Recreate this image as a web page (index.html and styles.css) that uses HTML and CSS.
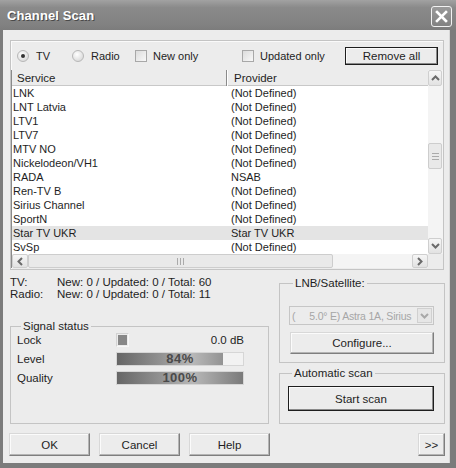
FILE: index.html
```html
<!DOCTYPE html>
<html>
<head>
<meta charset="utf-8">
<title>Channel Scan</title>
<link rel="stylesheet" href="styles.css">
</head>
<body>
<div class="window">
  <div class="titlebar">
    <span class="title">Channel Scan</span>
    <span class="close"><svg width="13" height="13" viewBox="0 0 13 13"><path d="M2 2 L11 11 M11 2 L2 11" stroke="#fff" stroke-width="2.6" stroke-linecap="square"/></svg></span>
  </div>
  <div class="client">
    <div class="topgroup">
      <div class="filters">
        <span class="opt opt-tv"><span class="radio on"></span>TV</span>
        <span class="opt opt-radio"><span class="radio"></span>Radio</span>
        <span class="opt opt-new"><span class="check"></span>New only</span>
        <span class="opt opt-upd"><span class="check"></span>Updated only</span>
        <span class="btn default remove">Remove all</span>
      </div>
      <div class="list">
        <div class="viewport">
          <div class="row head"><span class="c1">Service</span><span class="c2">Provider</span></div>
          <div class="row"><span class="c1">LNK</span><span class="c2">(Not Defined)</span></div>
          <div class="row"><span class="c1">LNT Latvia</span><span class="c2">(Not Defined)</span></div>
          <div class="row"><span class="c1">LTV1</span><span class="c2">(Not Defined)</span></div>
          <div class="row"><span class="c1">LTV7</span><span class="c2">(Not Defined)</span></div>
          <div class="row"><span class="c1">MTV NO</span><span class="c2">(Not Defined)</span></div>
          <div class="row"><span class="c1">Nickelodeon/VH1</span><span class="c2">(Not Defined)</span></div>
          <div class="row"><span class="c1">RADA</span><span class="c2">NSAB</span></div>
          <div class="row"><span class="c1">Ren-TV B</span><span class="c2">(Not Defined)</span></div>
          <div class="row"><span class="c1">Sirius Channel</span><span class="c2">(Not Defined)</span></div>
          <div class="row"><span class="c1">SportN</span><span class="c2">(Not Defined)</span></div>
          <div class="row sel"><span class="c1">Star TV UKR</span><span class="c2">Star TV UKR</span></div>
          <div class="row"><span class="c1">SvSp</span><span class="c2">(Not Defined)</span></div>
        </div>
        <div class="vscroll">
          <span class="sbtn"><svg width="9" height="6" viewBox="0 0 9 6"><path d="M1 5 L4.5 1.5 L8 5" fill="none" stroke="#6a6a6a" stroke-width="2"/></svg></span>
          <span class="vtrack top"></span>
          <span class="thumb vthumb"><span class="grip-h"></span></span>
          <span class="vtrack bottom"></span>
          <span class="sbtn"><svg width="9" height="6" viewBox="0 0 9 6"><path d="M1 1 L4.5 4.5 L8 1" fill="none" stroke="#6a6a6a" stroke-width="2"/></svg></span>
        </div>
        <div class="hscroll">
          <span class="sbtn"><svg width="6" height="9" viewBox="0 0 6 9"><path d="M5 1 L1.5 4.5 L5 8" fill="none" stroke="#6a6a6a" stroke-width="2"/></svg></span>
          <span class="thumb hthumb"><span class="grip-v"></span></span>
          <span class="htrack"></span>
          <span class="sbtn"><svg width="6" height="9" viewBox="0 0 6 9"><path d="M1 1 L4.5 4.5 L1 8" fill="none" stroke="#6a6a6a" stroke-width="2"/></svg></span>
        </div>
        <div class="corner"></div>
      </div>
    </div>

    <div class="lower">
      <div class="leftcol">
        <div class="stats">
          <span>TV:</span><span>New: 0 / Updated: 0 / Total: 60</span>
          <span>Radio:</span><span>New: 0 / Updated: 0 / Total: 11</span>
        </div>
        <fieldset class="group signal">
          <legend>Signal status</legend>
          <div class="sig-grid">
            <span class="lbl">Lock</span>
            <div class="lockrow"><span class="lock"></span><span class="db">0.0 dB</span></div>
            <span class="lbl">Level</span>
            <div class="bar"><span class="fill" style="width:84%"></span><span class="pct">84%</span></div>
            <span class="lbl">Quality</span>
            <div class="bar"><span class="fill" style="width:100%"></span><span class="pct">100%</span></div>
          </div>
        </fieldset>
      </div>
      <div class="rightcol">
        <fieldset class="group lnb">
          <legend>LNB/Satellite:</legend>
          <div class="combo"><span class="combo-text"><span class="paren">(</span>5.0° E) Astra 1A, Sirius</span><span class="combo-btn"><svg width="9" height="6" viewBox="0 0 9 6"><path d="M1 1 L4.5 4.5 L8 1" fill="none" stroke="#a8a8a8" stroke-width="2"/></svg></span></div>
          <span class="btn configure">Configure...</span>
        </fieldset>
        <fieldset class="group auto">
          <legend>Automatic scan</legend>
          <span class="btn default start">Start scan</span>
        </fieldset>
      </div>
    </div>

    <div class="footer">
      <span class="btn fbtn">OK</span>
      <span class="btn fbtn">Cancel</span>
      <span class="btn fbtn">Help</span>
      <span class="btn more">&gt;&gt;</span>
    </div>
  </div>
</div>
</body>
</html>
```
FILE: styles.css
```css
html, body {
  margin: 0;
  padding: 0;
  background: #ffffff;
}
body {
  font-family: "Liberation Sans", Arial, sans-serif;
  font-size: 11px;
  color: #1e1e1e;
}
.window {
  width: 456px;
  height: 468px;
  background: #7b7b7b;
  display: flex;
  flex-direction: column;
}
.titlebar {
  height: 30px;
  flex: none;
  display: flex;
  align-items: center;
  justify-content: space-between;
  padding: 0 4px 0 7px;
  background: linear-gradient(#a2a2a2, #8a8a8a 25%, #828282 80%, #7c7c7c);
}
.title {
  color: #fff;
  font-weight: bold;
  font-size: 13px;
  letter-spacing: 0.1px;
  text-shadow: 1px 1px 0 #4a4a4a;
  margin-top: 1px;
}
.close {
  width: 19px;
  height: 19px;
  border: 1px solid #f2f2f2;
  border-radius: 3px;
  background: linear-gradient(#9a9a9a, #828282);
  display: flex;
  align-items: center;
  justify-content: center;
  margin-top: 2px;
}
.client {
  flex: 1;
  margin: 0 6px 5px 3px;
  background: #ececec;
  padding: 10px 6px 0 7px;
  display: flex;
  flex-direction: column;
  box-shadow: inset -1px 0 0 #d8d8d8;
}

/* top group */
.topgroup {
  border: 1px solid #c4c4c4;
  box-shadow: inset 1px 1px 0 #fafafa;
  display: flex;
  flex-direction: column;
}
.filters {
  height: 29px;
  display: flex;
  align-items: center;
  padding-left: 6px;
}
.opt {
  display: flex;
  align-items: center;
}
.opt-tv { width: 55px; }
.opt-radio { width: 63px; }
.opt-new { width: 107px; }
.opt-upd { width: 100px; }
.radio {
  width: 12px;
  height: 12px;
  border-radius: 50%;
  border: 1px solid #b8b8b8;
  background: radial-gradient(circle at 40% 35%, #ffffff, #dedede 70%, #c8c8c8);
  margin-right: 7px;
  box-sizing: border-box;
  display: flex;
  align-items: center;
  justify-content: center;
}
.radio.on::after {
  content: "";
  width: 4px;
  height: 4px;
  border-radius: 50%;
  background: #333;
}
.check {
  width: 12px;
  height: 12px;
  box-sizing: border-box;
  border: 1px solid #a8a8a8;
  background: linear-gradient(135deg, #dcdcdc, #f8f8f8);
  margin-right: 6px;
}
.btn {
  display: flex;
  align-items: center;
  justify-content: center;
  box-sizing: border-box;
  background: #ececec;
  border: 1px solid;
  border-color: #d8d8d8 #7e7e7e #7e7e7e #d8d8d8;
  box-shadow: inset -1px -1px 0 #b4b4b4, inset 1px 1px 0 #fbfbfb;
  color: #1e1e1e;
}
.btn.default {
  border: 1px solid #1e1e1e;
  box-shadow: inset -1px -1px 0 #8a8a8a, inset 1px 1px 0 #fbfbfb;
}
.remove {
  margin-left: auto;
  margin-right: 5px;
  width: 93px;
  height: 18px;
  font-size: 11.5px;
}

/* list */
.list {
  display: grid;
  grid-template-columns: 417px 15px;
  grid-template-rows: 184px 14px;
  background: #fff;
  margin-bottom: 1px;
}
.viewport {
  background: #fff;
  overflow: hidden;
  border-left: 1px solid #8a8a8a;
}
.row {
  display: grid;
  grid-template-columns: 215px 1fr;
  height: 14px;
  line-height: 14px;
  white-space: nowrap;
}
.row .c1 { padding-left: 1px; }
.row .c2 { padding-left: 4px; }
.row.sel { background: #e4e4e4; }
.row.head {
  height: 16px;
  line-height: 16px;
  background: #ececec;
  border-bottom: 1px solid #c8c8c8;
  box-sizing: border-box;
  font-size: 11.5px;
}
.row.head .c1 {
  padding-left: 5px;
  border-right: 1px solid #8a8a8a;
  box-shadow: 1px 0 0 #fff;
}
.row.head .c2 { padding-left: 7px; }

.vscroll {
  display: flex;
  flex-direction: column;
  background: #f4f4f4;
  padding: 0 1px 0 0;
}
.sbtn {
  flex: none;
  width: 14px;
  height: 15px;
  box-sizing: border-box;
  border: 1px solid #cfcfcf;
  border-radius: 2px;
  background: linear-gradient(#f6f6f6, #e2e2e2);
  display: flex;
  align-items: center;
  justify-content: center;
}
.vscroll .sbtn { height: 16px; }
.vtrack.top { height: 57px; }
.vtrack.bottom { flex: 1; }
.thumb {
  box-sizing: border-box;
  border: 1px solid #cdcdcd;
  border-radius: 2px;
  background: #e9e9e9;
  display: flex;
  align-items: center;
  justify-content: center;
}
.vthumb { height: 26px; }
.grip-h {
  width: 7px;
  height: 5px;
  border-top: 1px solid #aaa;
  border-bottom: 1px solid #aaa;
  position: relative;
}
.grip-h::after {
  content: "";
  position: absolute;
  left: 0;
  right: 0;
  top: 2px;
  border-top: 1px solid #aaa;
}
.hscroll {
  display: flex;
  background: #f4f4f4;
  border-left: 1px solid #8a8a8a;
}
.hscroll .sbtn { width: 16px; height: 14px; }
.hthumb { width: 305px; height: 14px; }
.grip-v {
  width: 5px;
  height: 7px;
  border-left: 1px solid #aaa;
  border-right: 1px solid #aaa;
  position: relative;
}
.grip-v::after {
  content: "";
  position: absolute;
  top: 0;
  bottom: 0;
  left: 2px;
  border-left: 1px solid #aaa;
}
.htrack { flex: 1; }
.corner { background: #ececec; }

/* lower */
.lower {
  display: grid;
  grid-template-columns: 259px 166px;
  column-gap: 10px;
  margin-top: 6px;
  height: 148px;
}
.leftcol, .rightcol {
  display: flex;
  flex-direction: column;
  min-width: 0;
}
.stats {
  display: grid;
  grid-template-columns: 47px 1fr;
  line-height: 12px;
  font-size: 11.5px;
}
.group {
  margin: 0;
  border: 1px solid #c4c4c4;
  padding: 0;
  min-width: 0;
}
.group legend {
  padding: 0 2px;
  margin-left: 4px;
  line-height: 12px;
  font-size: 11.5px;
}
.signal {
  margin-top: auto;
  height: 104px;
  box-sizing: border-box;
  padding: 0 0 0 6px;
}
.sig-grid {
  display: grid;
  grid-template-columns: 99px 128px;
  grid-template-rows: 14px 14px 14px;
  row-gap: 5px;
  align-items: center;
  padding-top: 1px;
}
.sig-grid .lbl { font-size: 11.5px; }
.lockrow {
  display: flex;
  align-items: center;
  justify-content: space-between;
  height: 14px;
}
.lock {
  width: 13px;
  height: 14px;
  box-sizing: border-box;
  border: 1px solid #d2d2d2;
  border-right-color: #f8f8f8;
  border-bottom-color: #f8f8f8;
  padding: 1px;
  background: #888;
  background-clip: content-box;
}
.db { font-size: 11.5px; }
.bar {
  position: relative;
  height: 14px;
  box-sizing: border-box;
  border: 1px solid #d6d6d6;
  background: #f2f2f2;
  overflow: hidden;
}
.fill {
  display: block;
  height: 100%;
  background: linear-gradient(to right, #666, #929292 35%, #b8b8b8 60%, #7a7a7a 100%);
  background-size: 126px 100%;
}
.pct {
  position: absolute;
  left: 0;
  right: 0;
  top: -1px;
  text-align: center;
  font-weight: bold;
  font-size: 13px;
  line-height: 14px;
  color: #4a4a4a;
  letter-spacing: 0.5px;
}
.rightcol { gap: 4px; margin-top: 1px; }
.lnb {
  height: 86px;
  box-sizing: border-box;
  padding: 0 10px 0 9px;
  display: flex;
  flex-direction: column;
}
.combo {
  margin-top: 17px;
  height: 19px;
  box-sizing: border-box;
  border: 1px solid #c6c6c6;
  background: #ececec;
  display: flex;
  align-items: center;
  color: #a6a6a6;
  font-size: 10.5px;
  letter-spacing: -0.2px;
  padding: 1px;
  min-width: 0;
}
.combo-text {
  flex: 1;
  min-width: 0;
  padding-left: 1px;
  white-space: nowrap;
  overflow: hidden;
}
.paren { margin-right: 14px; }
.combo-btn {
  flex: none;
  width: 15px;
  height: 15px;
  box-sizing: border-box;
  border: 1px solid #d0d0d0;
  background: #e6e6e6;
  display: flex;
  align-items: center;
  justify-content: center;
}
.configure {
  margin-top: 7px;
  height: 22px;
  margin-left: 1px;
  font-size: 11.5px;
}
.auto {
  flex: 1;
  box-sizing: border-box;
  padding: 7px 10px 0 8px;
}
.start {
  height: 25px;
  font-size: 11.5px;
}

/* footer */
.footer {
  margin-top: 9px;
  display: flex;
  align-items: center;
  gap: 9px;
  margin-left: -1px;
  margin-right: -1px;
}
.fbtn {
  width: 81px;
  height: 23px;
  font-size: 11.5px;
}
.more {
  margin-left: auto;
  width: 27px;
  height: 23px;
  font-size: 11.5px;
}
```
